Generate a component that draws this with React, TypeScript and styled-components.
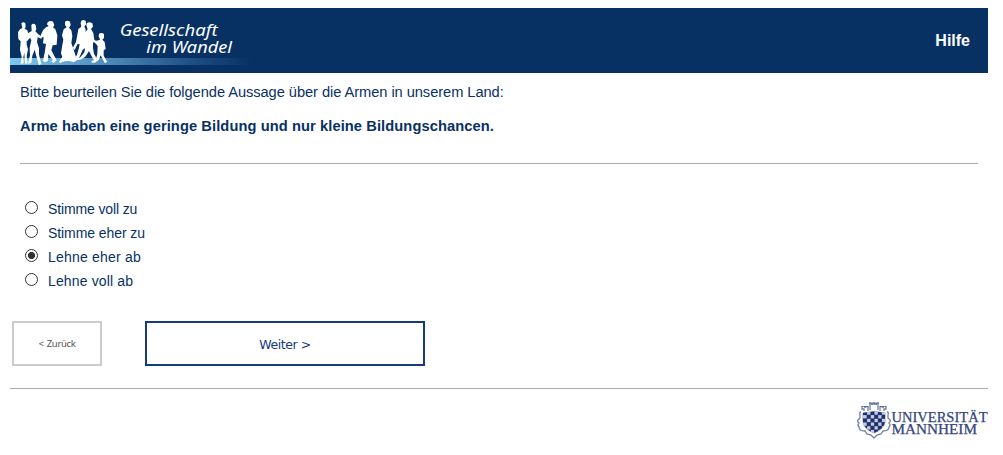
import React, { useState } from "react";
import styled, { createGlobalStyle } from "styled-components";

const GlobalStyle = createGlobalStyle`
  * { box-sizing: border-box; }
  body {
    margin: 0;
    background: #fff;
    color: #083163;
    font-family: "Liberation Sans", Arial, sans-serif;
  }
`;

const Page = styled.div`
  width: 978px;
  margin: 8px 0 0 10px;
`;

const Header = styled.header`
  display: flex;
  justify-content: space-between;
  align-items: center;
  height: 65px;
  padding-right: 18px;
  background: #083163;
`;

const Logo = styled.svg`
  display: block;
  flex: none;
`;

const HelpLink = styled.a`
  color: #fff;
  font-size: 16px;
  font-weight: bold;
  text-decoration: none;
`;

const Question = styled.section`
  height: 91px;
  margin: 0 10px;
  padding-top: 11px;
  border-bottom: 1px solid #a9a9a9;
  font-size: 14.67px;
  line-height: 17px;
`;

const Intro = styled.p`
  margin: 0 0 17px;
  letter-spacing: -0.06px;
`;

const Statement = styled.p`
  margin: 0;
  font-weight: bold;
  letter-spacing: 0.09px;
`;

const Options = styled.div`
  display: flex;
  flex-direction: column;
  padding: 33px 0 0 15px;
`;

const Option = styled.label<{ $tracking: number }>`
  display: flex;
  align-items: center;
  height: 24px;
  font-size: 14px;
  letter-spacing: ${(p) => p.$tracking}px;
`;

const Radio = styled.input`
  appearance: none;
  flex: none;
  width: 13px;
  height: 13px;
  margin: 0 10px 3px 0;
  border: 1px solid #333;
  border-radius: 50%;
  background: #fff;
  &:checked {
    background: radial-gradient(circle, #333 3.2px, #fff 3.9px);
  }
`;

const Actions = styled.div`
  display: flex;
  gap: 43px;
  padding: 28px 0 22px 2px;
  border-bottom: 1px solid #a9a9a9;
`;

const NavButton = styled.button<{ $primary?: boolean }>`
  width: ${(p) => (p.$primary ? 280 : 90)}px;
  height: 45px;
  padding: ${(p) => (p.$primary ? 2 : 0)}px 0 0;
  border: 2px solid ${(p) => (p.$primary ? "#163a7a" : "#ccc")};
  background: #fff;
  color: ${(p) => (p.$primary ? "#163a7a" : "#555")};
  font-family: ${(p) => (p.$primary ? '"DejaVu Sans", sans-serif' : '"Noto Sans", sans-serif')};
  font-size: ${(p) => (p.$primary ? 12.5 : 9.6)}px;
  letter-spacing: ${(p) => (p.$primary ? -0.45 : -0.35)}px;
  word-spacing: ${(p) => (p.$primary ? 0 : 1)}px;
`;

const Footer = styled.footer`
  display: flex;
  justify-content: flex-end;
  padding-top: 13px;
`;

function StudyLogo() {
  return (
    <Logo width="245" height="65" viewBox="30 24 735 195" role="img" aria-label="Gesellschaft im Wandel">
      <defs>
        <linearGradient id="band" x1="0" x2="1">
          <stop offset="0" stopColor="#7cc8ee" />
          <stop offset="0.4" stopColor="#4f8cba" />
          <stop offset="0.75" stopColor="#1f4f84" />
          <stop offset="1" stopColor="#083163" />
        </linearGradient>
      </defs>
      <rect x="30" y="174" width="725" height="21" fill="url(#band)" />
      <g fill="#fff">
        <path d="M64 70 Q70 64 76 70 L77 80 L74 86 L82 91 L85 103 L80 113 L80 134 L84 148 L80 169 L83 190 L75 192 L73 158 L70 172 L71 190 L62 192 L65 171 L60 149 L62 124 L55 117 L54 97 L60 88 L67 84 Z" />
        <path d="M94 75 Q100 68 107 75 L109 88 L106 94 L114 102 L122 108 L130 97 L133 101 L124 116 L113 112 L111 126 L117 145 L117 164 L124 191 L117 196 L109 169 L104 149 L97 167 L94 188 L84 192 L90 166 L89 143 L94 121 L90 113 L81 124 L77 119 L84 100 L95 93 Z" />
        <path d="M143 67 Q153 59 160 67 L163 75 L159 82 L166 88 L172 106 L170 134 L158 136 L154 151 L163 168 L170 181 L162 188 L154 186 L158 179 L145 162 L144 182 L134 187 L129 182 L134 158 L138 132 L129 130 L131 112 L121 110 L125 99 L130 89 L139 81 L146 79 L141 73 Z" />
        <path d="M195 65 Q202 59 210 65 L212 75 L207 83 L214 91 L217 108 L214 129 L222 152 L231 181 L221 187 L208 183 L192 184 L182 189 L176 186 L187 171 L183 160 L187 135 L190 119 L186 106 L191 88 L200 82 L195 75 Z" />
        <path d="M244 62 Q251 57 257 63 L258 73 L253 80 L257 88 L256 120 L259 142 L248 149 L240 168 L233 181 L224 177 L231 164 L236 147 L239 132 L232 133 L224 150 L218 144 L228 126 L232 105 L235 87 L244 80 L242 70 Z" />
        <path d="M260 70 Q268 63 277 70 L279 80 L273 87 L280 99 L283 119 L294 127 L291 132 L279 126 L279 144 L282 161 L291 177 L284 184 L276 171 L267 153 L256 170 L244 178 L236 180 L229 178 L241 172 L253 157 L257 134 L250 116 L254 99 L263 88 L259 76 Z" />
        <path d="M297 101 Q305 96 312 102 L312 114 L307 119 L314 126 L317 147 L311 151 L311 167 L322 186 L314 189 L302 166 L297 179 L285 188 L276 188 L274 184 L288 178 L292 161 L293 139 L287 130 L289 122 L299 120 L300 117 L296 110 Z" />
      </g>
      <g fill="#fff" fontFamily='"Noto Sans", sans-serif' fontStyle="italic" fontSize="47">
        <text x="359" y="107" textLength="294" lengthAdjust="spacingAndGlyphs">Gesellschaft</text>
        <text x="439" y="158" textLength="257" lengthAdjust="spacingAndGlyphs">im Wandel</text>
      </g>
    </Logo>
  );
}

const shield: [number, number][] = [];
for (let row = 0; row < 6; row++) {
  for (let col = 0; col < 6; col++) {
    if ((row + col) % 2 === 0) shield.push([col, row]);
  }
}

function UniversityLogo() {
  return (
    <Logo width="132" height="38" viewBox="0 0 132 38" role="img" aria-label="Universität Mannheim">
      <defs>
        <clipPath id="crest">
          <path d="M7 11 Q18 8 29 11 V20 Q28 27 18 31 Q8 27 7 20Z" />
        </clipPath>
      </defs>
      <g fill="none" stroke="#7380a8" strokeWidth="1.3">
        <path d="M5 10 Q3 10 4 13 L4 16 L2 18 Q1 19 3 21 Q1 23 3 25 Q3 29 9 29 L11 32 L15 33 L18 36 L21 33 L25 32 L27 29 Q33 29 33 25 Q35 23 33 21 Q35 19 34 18 L32 16 L32 13 Q33 10 31 10" />
        <path d="M8 9 V7 H6 V4 M8 5 H10 V4 M12 4 V9 M14 8 V3 M13 1 H15 V2 H17 V1 H19 V2 H21 V1 H23 M22 3 V8 M24 9 V4 M26 4 V5 H28 M30 4 V7 H28 V9" />
        <path d="M7 11 Q18 8 29 11 V20 Q28 27 18 31 Q8 27 7 20Z" strokeWidth="0.8" />
      </g>
      <path d="M6 4.500 H12 M24 4.500 H30 M13 2 H23" stroke="#46568a" strokeDasharray="1.500 0.700" />
      <g clipPath="url(#crest)" fill="#1f3170">
        <rect x="7" y="8" width="22" height="24" fill="#c6cddf" />
        {shield.map(([col, row]) => (
          <rect key={`${col}-${row}`} x={7 + col * 3.7} y={9 + row * 3.7} width="4.1" height="4.1" />
        ))}
      </g>
      <g fill="#34457a" stroke="#34457a" strokeWidth="0.25" fontFamily='"Liberation Serif", serif' fontSize="13.8">
        <text x="35.500" y="20.400" textLength="96" lengthAdjust="spacingAndGlyphs">UNIVERSITÄT</text>
        <text x="35.500" y="32.400" textLength="85.500" lengthAdjust="spacingAndGlyphs">MANNHEIM</text>
      </g>
    </Logo>
  );
}

const answers = [
  { label: "Stimme voll zu", tracking: -0.13 },
  { label: "Stimme eher zu", tracking: -0.08 },
  { label: "Lehne eher ab", tracking: 0.2 },
  { label: "Lehne voll ab", tracking: 0.15 },
];

export default function App() {
  const [selected, setSelected] = useState(2);
  return (
    <Page>
      <GlobalStyle />
      <Header>
        <StudyLogo />
        <HelpLink>Hilfe</HelpLink>
      </Header>
      <Question>
        <Intro>Bitte beurteilen Sie die folgende Aussage über die Armen in unserem Land:</Intro>
        <Statement>Arme haben eine geringe Bildung und nur kleine Bildungschancen.</Statement>
      </Question>
      <Options>
        {answers.map(({ label, tracking }, i) => (
          <Option key={label} $tracking={tracking}>
            <Radio type="radio" name="answer" checked={selected === i} onChange={() => setSelected(i)} />
            {label}
          </Option>
        ))}
      </Options>
      <Actions>
        <NavButton>&lt; Zurück</NavButton>
        <NavButton $primary>Weiter &gt;</NavButton>
      </Actions>
      <Footer>
        <UniversityLogo />
      </Footer>
    </Page>
  );
}
